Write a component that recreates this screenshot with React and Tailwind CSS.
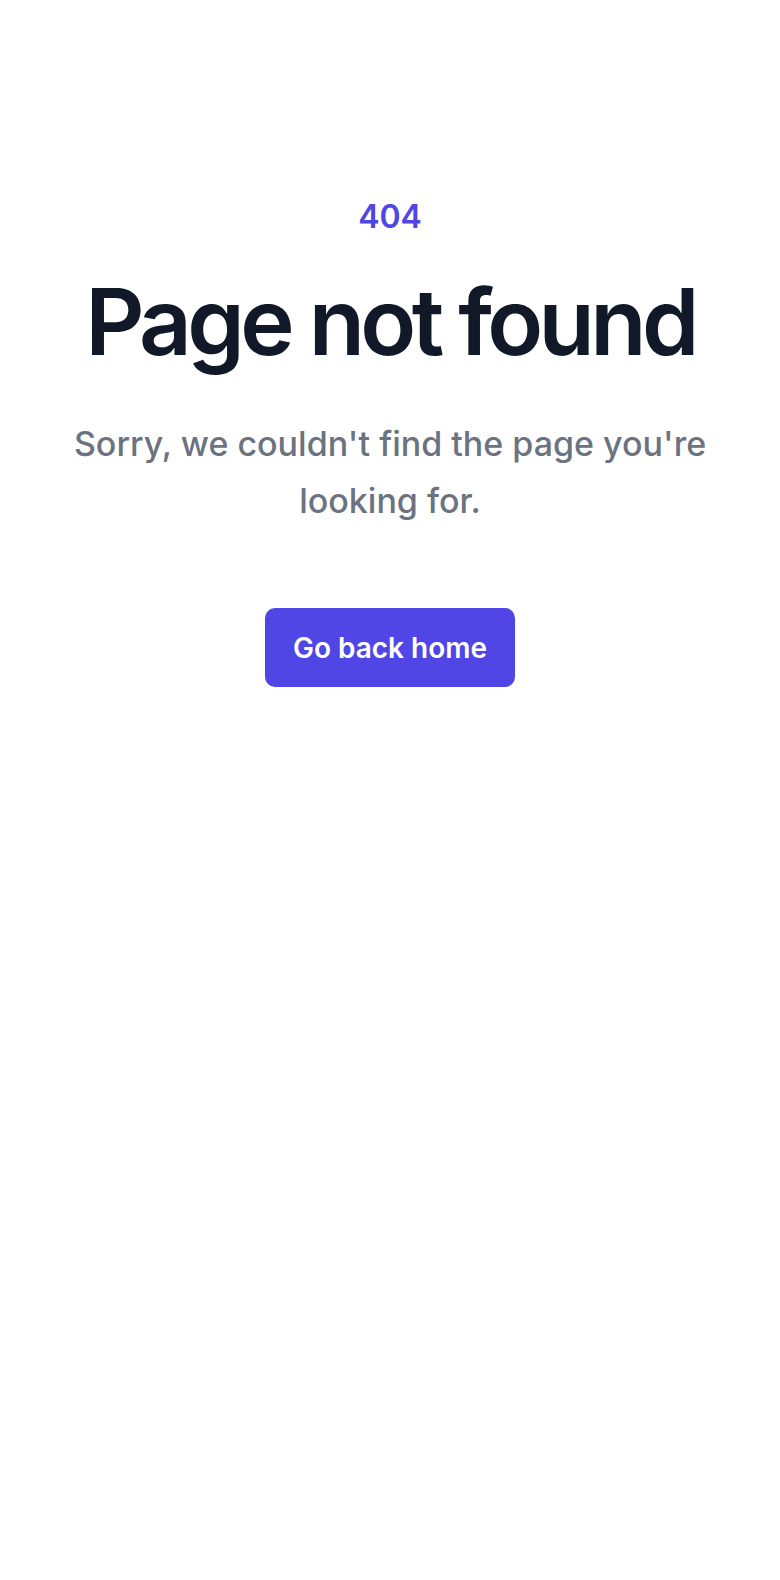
export default function App() {
  return (
    <main className="min-h-screen bg-white px-6 pt-[193px] text-center font-['Inter','Liberation_Sans',sans-serif]">
      <p className="text-[32px] leading-[48px] font-semibold text-[#4f46e5]">404</p>
      <h1 className="mt-[35px] text-[92px] leading-none font-semibold tracking-[-0.05em] text-[#111827]">
        Page not found
      </h1>
      <p className="mx-auto mt-[47px] max-w-[680px] text-[34px] leading-[57px] font-medium text-[#6b7280]">
        Sorry, we couldn't find the page you're looking for.
      </p>
      <div className="mt-[79px] flex items-center justify-center">
        <a
          href="#"
          className="inline-flex h-[79px] items-center rounded-[10px] bg-[#4f46e5] px-7 text-[28px] font-semibold text-white"
        >
          Go back home
        </a>
      </div>
    </main>
  );
}
